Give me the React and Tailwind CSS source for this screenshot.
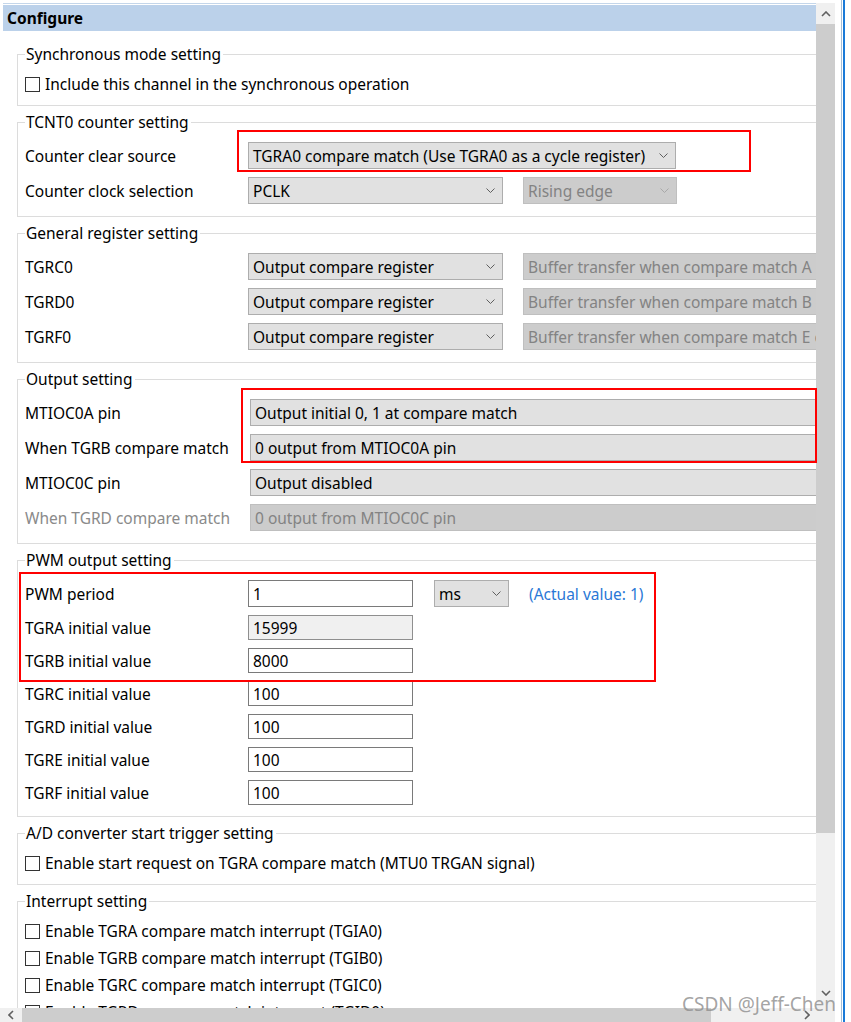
import React from "react";

const Chevron = ({ color = "#5f5f5f" }) => (
    <svg width="9" height="5" viewBox="0 0 9 5" className="shrink-0">
        <polyline points="0.5,0.5 4.5,4.5 8.5,0.5" fill="none" stroke={color} strokeWidth="1" />
    </svg>
);

const Select = ({ value, className = "", disabled = false, arrow = true }) => (
    <div
        className={`h-[27px] flex items-center justify-between pl-[4px] pr-[7px] border shrink-0 overflow-hidden ${
            disabled ? "bg-[#cccccc] border-[#bfbfbf] text-[#838383]" : "bg-[#e1e1e1] border-[#adadad] text-black"
        } ${className}`}
    >
        <span className="whitespace-nowrap">{value}</span>
        {arrow && <Chevron color={disabled ? "#a8a8a8" : "#5f5f5f"} />}
    </div>
);

const Input = ({ value, className = "", disabled = false }) => (
    <div
        className={`w-[165px] flex items-center pl-[4px] border shrink-0 ${
            disabled ? "bg-[#f0f0f0] border-[#8f8f8f]" : "bg-white border-[#7a7a7a]"
        } ${className}`}
    >
        {value}
    </div>
);

const Check = ({ label }) => (
    <div className="h-[20px] flex items-center">
        <div className="w-[15px] h-[15px] border border-[#333333] bg-white shrink-0" />
        <span className="ml-[5px] whitespace-nowrap">{label}</span>
    </div>
);

const Group = ({ title, children, className = "" }) => (
    <fieldset className={`w-[840px] ml-[17px] border border-[#dcdcdc] pl-[7px] shrink-0 ${className}`}>
        <legend className="pl-[1px] pr-[2px] leading-[20px]">{title}</legend>
        {children}
    </fieldset>
);

const Row = ({ label, children, labelW = "w-[223px]", muted = false }) => (
    <div className="flex items-center">
        <div className={`${labelW} shrink-0 whitespace-nowrap ${muted ? "text-[#8a8a8a]" : ""}`}>{label}</div>
        {children}
    </div>
);

const App = () => {
    const interrupts = [
        "Enable TGRA compare match interrupt (TGIA0)",
        "Enable TGRB compare match interrupt (TGIB0)",
        "Enable TGRC compare match interrupt (TGIC0)",
        "Enable TGRD compare match interrupt (TGID0)",
    ];

    return (
        <div className="relative w-[851px] h-[1022px] bg-white overflow-hidden flex font-['Noto_Sans',sans-serif] text-[15.5px] leading-[20px] text-black">
            <div className="w-[835px] flex flex-col shrink-0">
                <div className="flex h-[1008px] pt-[3px]">
                    {/* main panel */}
                    <div className="w-[816px] overflow-hidden flex flex-col">
                        <div className="ml-[3px] border-t border-[#c4d6ea] pt-[1px] shrink-0">
                            <div className="h-[26px] bg-[#bbd1ea] flex items-center pl-[4px] pb-[1px] font-bold">Configure</div>
                        </div>

                        <div className="flex flex-col gap-[6px] pt-[13px]">
                            <Group title="Synchronous mode setting" className="pt-[10px] pb-[11px]">
                                <Check label="Include this channel in the synchronous operation" />
                            </Group>

                            <Group title="TCNT0 counter setting" className="pt-[10px] pb-[12px]">
                                <div className="flex flex-col gap-[8px]">
                                    <Row label="Counter clear source">
                                        <Select value="TGRA0 compare match (Use TGRA0 as a cycle register)" className="w-[428px]" />
                                    </Row>
                                    <Row label="Counter clock selection">
                                        <Select value="PCLK" className="w-[255px]" />
                                        <Select value="Rising edge" disabled className="w-[154px] ml-[20px]" />
                                    </Row>
                                </div>
                            </Group>

                            <Group title="General register setting" className="pt-[10px] pb-[12px]">
                                <div className="flex flex-col gap-[8px]">
                                    <Row label="TGRC0">
                                        <Select value="Output compare register" className="w-[255px]" />
                                        <Select value="Buffer transfer when compare match A occurs" disabled arrow={false} className="w-[340px] ml-[20px]" />
                                    </Row>
                                    <Row label="TGRD0">
                                        <Select value="Output compare register" className="w-[255px]" />
                                        <Select value="Buffer transfer when compare match B occurs" disabled arrow={false} className="w-[340px] ml-[20px]" />
                                    </Row>
                                    <Row label="TGRF0">
                                        <Select value="Output compare register" className="w-[255px]" />
                                        <Select value="Buffer transfer when compare match E occurs" disabled arrow={false} className="w-[340px] ml-[20px]" />
                                    </Row>
                                </div>
                            </Group>

                            <Group title="Output setting" className="pt-[10px] pb-[12px]">
                                <div className="flex flex-col gap-[8px]">
                                    <Row label="MTIOC0A pin" labelW="w-[225px]">
                                        <Select value="Output initial 0, 1 at compare match" arrow={false} className="w-[600px]" />
                                    </Row>
                                    <Row label="When TGRB compare match" labelW="w-[225px]">
                                        <Select value="0 output from MTIOC0A pin" arrow={false} className="w-[600px]" />
                                    </Row>
                                    <Row label="MTIOC0C pin" labelW="w-[225px]">
                                        <Select value="Output disabled" arrow={false} className="w-[600px]" />
                                    </Row>
                                    <Row label="When TGRD compare match" labelW="w-[225px]" muted>
                                        <Select value="0 output from MTIOC0C pin" disabled arrow={false} className="w-[600px]" />
                                    </Row>
                                </div>
                            </Group>

                            <Group title="PWM output setting" className="pt-[10px] pb-[11px]">
                                <div className="flex flex-col gap-[8px]">
                                    <Row label="PWM period">
                                        <Input value="1" className="h-[27px]" />
                                        <Select value="ms" className="w-[75px] ml-[21px]" />
                                        <span className="ml-[20px] text-[#2a78d6] whitespace-nowrap">(Actual value: 1)</span>
                                    </Row>
                                    <Row label="TGRA initial value">
                                        <Input value="15999" disabled className="h-[25px]" />
                                    </Row>
                                    <Row label="TGRB initial value">
                                        <Input value="8000" className="h-[25px]" />
                                    </Row>
                                    <Row label="TGRC initial value">
                                        <Input value="100" className="h-[25px]" />
                                    </Row>
                                    <Row label="TGRD initial value">
                                        <Input value="100" className="h-[25px]" />
                                    </Row>
                                    <Row label="TGRE initial value">
                                        <Input value="100" className="h-[25px]" />
                                    </Row>
                                    <Row label="TGRF initial value">
                                        <Input value="100" className="h-[25px]" />
                                    </Row>
                                </div>
                            </Group>

                            <Group title="A/D converter start trigger setting" className="pt-[10px] pb-[11px]">
                                <Check label="Enable start request on TGRA compare match (MTU0 TRGAN signal)" />
                            </Group>

                            <Group title="Interrupt setting" className="pt-[10px] pb-[11px]">
                                <div className="flex flex-col gap-[7px]">
                                    {interrupts.map((t) => (
                                        <Check key={t} label={t} />
                                    ))}
                                </div>
                            </Group>
                        </div>
                    </div>

                    {/* vertical scrollbar */}
                    <div className="w-[19px] flex flex-col bg-[#f0f0f0] shrink-0">
                        <div className="h-[21px] flex items-center justify-center shrink-0">
                            <svg width="10" height="6" viewBox="0 0 10 6">
                                <polyline points="1,5 5,1 9,5" fill="none" stroke="#606060" strokeWidth="1.6" />
                            </svg>
                        </div>
                        <div className="h-[809px] bg-[#cdcdcd] shrink-0" />
                        <div className="flex-1 flex items-end justify-center pb-[12px]">
                            <svg width="10" height="6" viewBox="0 0 10 6">
                                <polyline points="1,1 5,5 9,1" fill="none" stroke="#606060" strokeWidth="1.6" />
                            </svg>
                        </div>
                    </div>
                </div>

                {/* horizontal scrollbar */}
                <div className="h-[14px] flex bg-[#f0f0f0] shrink-0">
                    <div className="w-[22px] flex items-center justify-center shrink-0">
                        <svg width="6" height="10" viewBox="0 0 6 10">
                            <polyline points="5,1 1,5 5,9" fill="none" stroke="#606060" strokeWidth="1.6" />
                        </svg>
                    </div>
                    <div className="w-[689px] bg-[#cdcdcd] shrink-0" />
                    <div className="w-[105px] flex items-center justify-end pr-[6px] shrink-0">
                        <svg width="6" height="10" viewBox="0 0 6 10">
                            <polyline points="1,1 5,5 1,9" fill="none" stroke="#606060" strokeWidth="1.6" />
                        </svg>
                    </div>
                    <div className="flex-1" />
                </div>
            </div>

            {/* right window edge */}
            <div className="flex-1 flex">
                <div className="w-[6px]" />
                <div className="w-[1px] bg-[#a9bfd6]" />
                <div className="w-[1px]" />
                <div className="w-[2px] bg-[#1a7ad8]" />
            </div>

            {/* red annotation boxes */}
            <div className="absolute left-[237px] top-[130px] w-[514px] h-[42px] border-2 border-[#ff0000]" />
            <div className="absolute left-[241px] top-[388px] w-[576px] h-[75px] border-2 border-[#ff0000]" />
            <div className="absolute left-[19px] top-[572px] w-[637px] h-[110px] border-2 border-[#ff0000]" />

            {/* watermark */}
            <div className="absolute left-[682px] top-[993px] text-[19px] leading-[22px] text-[#8c8c8c]/80 whitespace-nowrap">
                CSDN @Jeff-Chen
            </div>
        </div>
    );
};

export default App;
